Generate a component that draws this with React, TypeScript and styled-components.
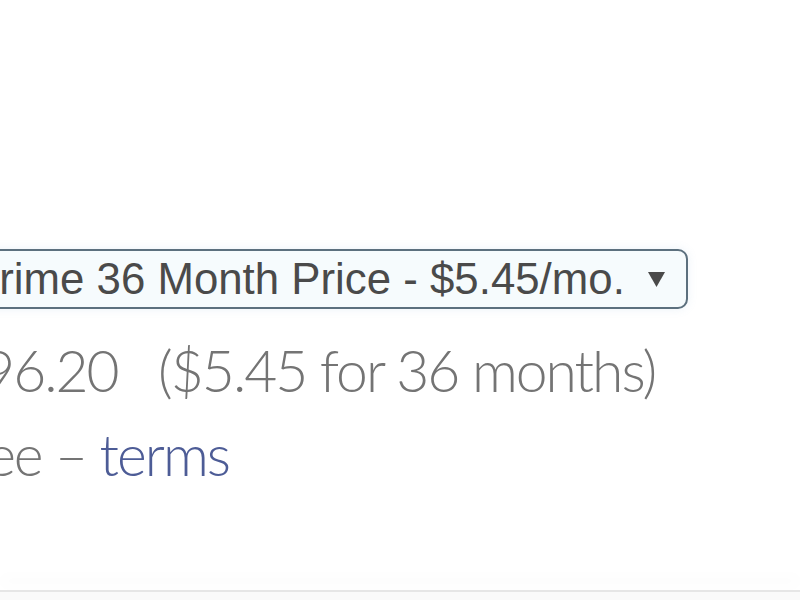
import React from "react";
import styled, {createGlobalStyle} from "styled-components";

const GlobalStyle = createGlobalStyle`
  html, body {
    margin: 0;
    padding: 0;
    background: #fff;
  }
  body {
    font-family: "Liberation Sans", Arial, sans-serif;
  }
`

const Page = styled.div`
  width: 800px;
  height: 600px;
  overflow: hidden;
  display: flex;
  flex-direction: column;
  background: #fff;
`

const Offer = styled.div`
  flex: 1;
  display: flex;
  flex-direction: column;
  align-items: flex-start;
  margin-left: -58px;
  padding-top: 249px;
`

const Select = styled.div`
  display: flex;
  align-items: center;
  gap: 23px;
  height: 56px;
  padding: 0 21px 0 26px;
  border: 2px solid #5c707e;
  border-radius: 10px;
  background: #f6fbfd;
  box-shadow: 0 0 10px rgba(120, 170, 210, 0.15);
  color: #4a4a4a;
  font-family: "Liberation Sans", Arial, sans-serif;
  font-size: 43.8px;
  white-space: nowrap;
`

const Arrow = styled.svg`
  width: 17px;
  height: 15px;
  flex: none;
  fill: #4a4a4a;
`

const Line = styled.div<{ $top: number, $indent?: number }>`
  margin-top: ${p => p.$top}px;
  margin-left: ${p => p.$indent || 0}px;
  font-family: Lato, "Open Sans", sans-serif;
  font-weight: 300;
  font-size: 57px;
  letter-spacing: -2px;
  line-height: 80px;
  color: #747474;
  white-space: pre;
`

const Link = styled.a`
  color: #4d5c96;
  text-decoration: none;
`

const Footer = styled.div`
  height: 8px;
  border-top: 2px solid #e6e6e6;
  background: #fafafa;
  box-shadow: 0 -14px 14px rgba(0, 0, 0, 0.015);
`

function App() {
    return (
        <Page>
            <GlobalStyle/>
            <Offer>
                <Select>
                    <span>Prime 36 Month Price - $5.45/mo.</span>
                    <Arrow viewBox="0 0 17 15">
                        <polygon points="0,0 17,0 8.5,15"/>
                    </Arrow>
                </Select>
                <Line $top={21} $indent={-22}>$196.20   ($5.45 for 36 months)</Line>
                <Line $top={4}>
                    Free – <Link href="#">terms</Link>
                </Line>
            </Offer>
            <Footer/>
        </Page>
    )
}

export default App;
